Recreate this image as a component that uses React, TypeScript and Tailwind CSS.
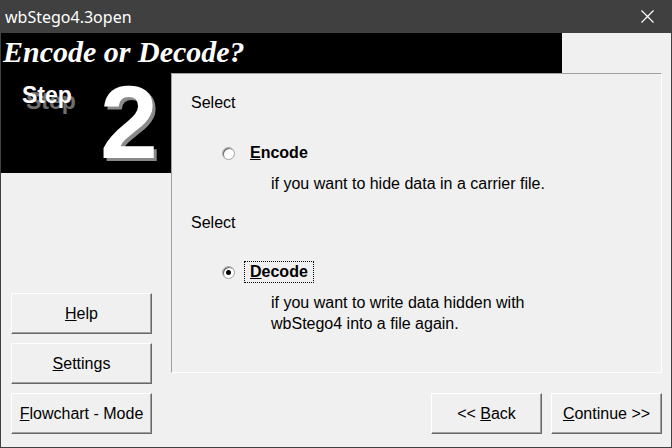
import React from "react";

const sans = { fontFamily: '"Liberation Sans", Arial, sans-serif' };

function Btn({ children, className = "" }: { children: React.ReactNode; className?: string }) {
  return (
    <div
      className={`flex items-center justify-center bg-[#f0f0f0] border-t border-l border-white border-r border-b border-r-[#696969] border-b-[#696969] shadow-[inset_-1px_-1px_0_#a0a0a0] text-[16px] text-black ${className}`}
      style={sans}
    >
      {children}
    </div>
  );
}

function Radio({ checked }: { checked?: boolean }) {
  return (
    <div className="w-[13px] h-[13px] rounded-full bg-white border border-[#a0a0a0] shadow-[inset_1px_1px_0_#696969] flex items-center justify-center">
      {checked && <div className="w-[5px] h-[5px] rounded-full bg-black" />}
    </div>
  );
}

export default function App() {
  return (
    <div className="w-[672px] h-[448px] flex flex-col overflow-hidden bg-[#f0f0f0]" style={sans}>
      {/* Title bar */}
      <div className="h-[33px] bg-[#404040] flex items-center justify-between pl-[5px] pr-[18px] shrink-0">
        <span className="text-white text-[16px]" style={{ fontFamily: '"Noto Sans", "Open Sans", sans-serif' }}>
          wbStego4.3open
        </span>
        <svg width="13" height="13" viewBox="0 0 13 13">
          <path d="M0.5 0.5 L12.5 12.5 M12.5 0.5 L0.5 12.5" stroke="white" strokeWidth="1.2" />
        </svg>
      </div>
      {/* Body */}
      <div className="flex-1 flex flex-col border-l border-r border-b border-[#404040]">
        {/* Header */}
        <div className="h-[40px] flex shrink-0">
          <div className="w-[561px] bg-black flex items-center pl-[2px]">
            <span
              className="text-white text-[30px] font-bold italic leading-none mt-[-2px]"
              style={{ fontFamily: '"Liberation Serif", "Times New Roman", serif' }}
            >
              Encode or Decode?
            </span>
          </div>
          <div className="flex-1" />
        </div>
        <div className="flex flex-1">
          {/* left column */}
          <div className="w-[170px] flex flex-col shrink-0">
            <div className="h-[100px] bg-black relative flex">
              <span
                className="absolute left-[21px] top-[11px] text-white font-bold text-[23px] leading-none"
                style={{ textShadow: "4px 6px 0 #6e6e6e" }}
              >
                Step
              </span>
              <span
                className="absolute left-[99px] top-[-3px] text-white font-bold text-[104px] leading-none"
                style={{ textShadow: "3px 3px 0 #8a8a8a" }}
              >
                2
              </span>
            </div>
            <div className="flex flex-col gap-[9px] pl-[10px] mt-[120px]">
              <Btn className="w-[141px] h-[41px]">
                <span><u>H</u>elp</span>
              </Btn>
              <Btn className="w-[141px] h-[41px]">
                <span><u>S</u>ettings</span>
              </Btn>
              <Btn className="w-[141px] h-[41px]">
                <span><u>F</u>lowchart - Mode</span>
              </Btn>
            </div>
          </div>
          {/* right column */}
          <div className="flex-1 flex flex-col">
            <div className="w-[491px] h-[300px] border-t border-l border-[#a0a0a0] border-r border-b border-r-white border-b-white flex flex-col pl-[19px] pt-[20px] text-[16px] text-black">
              <div className="leading-[18px]">Select</div>
              <div className="mt-[32px] flex items-center h-[18px] pl-[31px]">
                <Radio />
                <span className="ml-[15px] font-bold leading-[18px]"><u>E</u>ncode</span>
              </div>
              <div className="mt-[13px] pl-[80px] leading-[18px]">if you want to hide data in a carrier file.</div>
              <div className="mt-[21px] leading-[18px]">Select</div>
              <div className="mt-[31px] flex items-center h-[18px] pl-[31px]">
                <Radio checked />
                <span className="ml-[9px] font-bold leading-[18px] px-[5px] py-[1px] border border-dotted border-black"><u>D</u>ecode</span>
              </div>
              <div className="mt-[11px] pl-[80px] leading-[21px]">
                <div>if you want to write data hidden with</div>
                <div>wbStego4 into a file again.</div>
              </div>
            </div>
            <div className="flex justify-end gap-[9px] pr-[9px] mt-[20px]">
              <Btn className="w-[111px] h-[41px]">
                <span>&lt;&lt; <u>B</u>ack</span>
              </Btn>
              <Btn className="w-[111px] h-[41px]">
                <span><u>C</u>ontinue &gt;&gt;</span>
              </Btn>
            </div>
          </div>
        </div>
      </div>
    </div>
  );
}
